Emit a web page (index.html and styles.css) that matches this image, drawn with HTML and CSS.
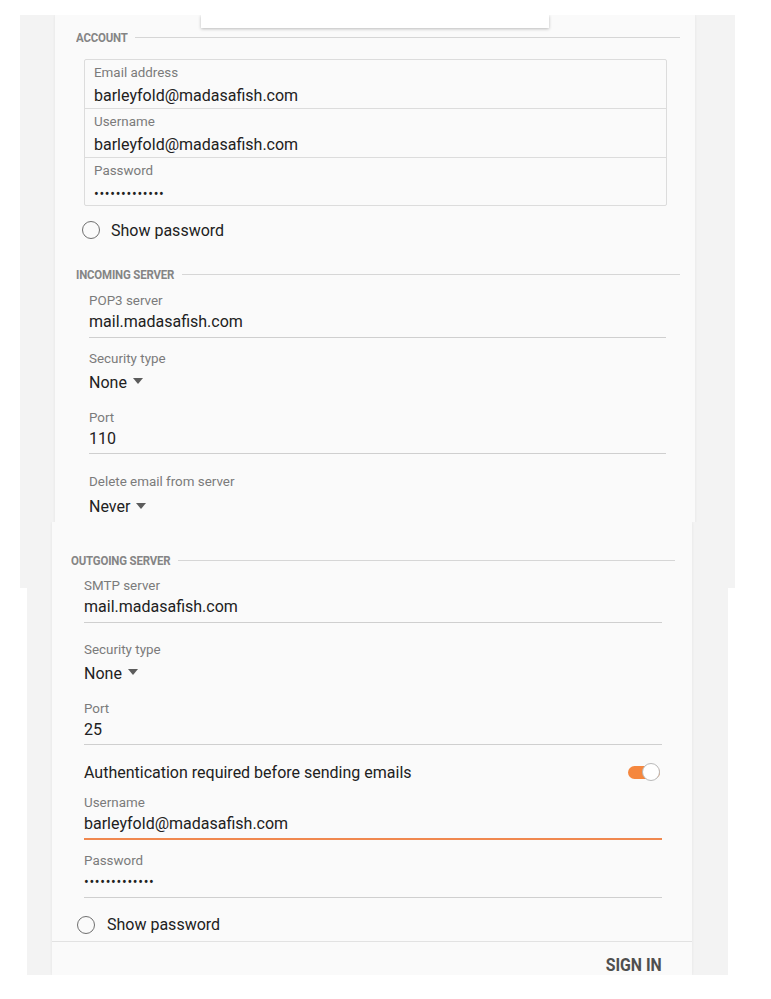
FILE: index.html
```html
<!DOCTYPE html>
<html>
<head>
<meta charset="utf-8">
<link rel="stylesheet" href="styles.css">
</head>
<body>
<div class="shot shot-top">
  <div class="card card-top">
    <div class="dropdown"></div>
    <div class="head head-account"><span class="head-text">ACCOUNT</span><span class="head-line"></span></div>
    <div class="box">
      <div class="box-row"><div class="label">Email address</div><div class="value">barleyfold@madasafish.com</div></div>
      <div class="box-row"><div class="label">Username</div><div class="value">barleyfold@madasafish.com</div></div>
      <div class="box-row last"><div class="label">Password</div><div class="value dots">•••••••••••••</div></div>
    </div>
    <div class="check check-top"><span class="radio"></span><span class="check-text">Show password</span></div>
    <div class="head head-incoming"><span class="head-text">INCOMING SERVER</span><span class="head-line"></span></div>
    <div class="field f-pop">
      <div class="label">POP3 server</div>
      <div class="value input">mail.madasafish.com</div>
    </div>
    <div class="field f-sec1">
      <div class="label">Security type</div>
      <div class="value select">None <span class="caret"></span></div>
    </div>
    <div class="field f-port1">
      <div class="label">Port</div>
      <div class="value input">110</div>
    </div>
    <div class="field f-del">
      <div class="label">Delete email from server</div>
      <div class="value select">Never <span class="caret"></span></div>
    </div>
  </div>
</div>
<div class="shot shot-bottom">
  <div class="card card-bottom">
    <div class="head head-outgoing"><span class="head-text">OUTGOING SERVER</span><span class="head-line"></span></div>
    <div class="field2 f-smtp">
      <div class="label">SMTP server</div>
      <div class="value input">mail.madasafish.com</div>
    </div>
    <div class="field2 f-sec2">
      <div class="label">Security type</div>
      <div class="value select">None <span class="caret"></span></div>
    </div>
    <div class="field2 f-port2">
      <div class="label">Port</div>
      <div class="value input">25</div>
    </div>
    <div class="auth">
      <span class="auth-text">Authentication required before sending emails</span>
      <span class="toggle"><span class="knob"></span></span>
    </div>
    <div class="field2 f-user">
      <div class="label">Username</div>
      <div class="value input focused">barleyfold@madasafish.com</div>
    </div>
    <div class="field2 f-pass">
      <div class="label">Password</div>
      <div class="value input dots">•••••••••••••</div>
    </div>
    <div class="check check-bottom"><span class="radio"></span><span class="check-text">Show password</span></div>
    <div class="footer"><span class="signin">SIGN IN</span></div>
  </div>
</div>
</body>
</html>
```
FILE: styles.css
```css
* { box-sizing: border-box; }
html, body { margin: 0; padding: 0; background: #ffffff; }
body {
  font-family: Roboto, "Noto Sans", "Liberation Sans", sans-serif;
  color: #212121;
  width: 771px;
  height: 999px;
  overflow: hidden;
}

.shot { background: #f3f3f3; }
.shot-top {
  margin: 15px 0 0 20px;
  width: 715px;
  height: 573px;
  overflow: hidden;
}
.shot-bottom {
  position: relative;
  margin: -66px 0 0 27px;
  width: 701px;
  height: 453px;
  overflow: hidden;
}
.card {
  background: #fafafa;
  height: 100%;
  box-shadow: 0 0 3px rgba(0,0,0,0.07);
  display: flex;
  flex-direction: column;
}
.card-top { margin-left: 35px; width: 640px; }
.card-bottom { margin-left: 25px; width: 640px; }

.dropdown {
  margin-left: 146px;
  width: 348px;
  height: 13px;
  background: #ffffff;
  box-shadow: 0 1px 3px rgba(0,0,0,0.25);
  flex: none;
}

.head {
  height: 18px;
  display: flex;
  align-items: center;
  gap: 6px;
  flex: none;
}
.head-text {
  font-weight: 700;
  font-size: 13px;
  color: #858585;
  letter-spacing: -0.2px;
  display: inline-block;
  transform: scaleX(0.88);
  transform-origin: left center;
  white-space: nowrap;
}
.head-line { flex: 1; height: 1px; background: #d6d6d6; }
.head-account { padding: 0 15px 0 21px; }
.head-account .head-text { margin-right: -6px; }
.head-incoming { margin-top: 23px; padding: 0 15px 0 21px; }
.head-incoming .head-text { margin-right: -12px; }
.head-outgoing { margin-top: 29px; padding: 0 17px 0 19px; }
.head-outgoing .head-text { margin-right: -12px; }

.label {
  font-size: 13.4px;
  line-height: 16px;
  color: #7b7b7b;
}
.value {
  font-size: 16px;
  line-height: 22px;
  color: #212121;
  white-space: nowrap;
}
.dots { font-size: 14px; letter-spacing: 0.7px; }

.box {
  margin: 13px 28px 0 29px;
  border: 1px solid #dcdcdc;
  border-radius: 2px;
  flex: none;
}
.box-row {
  height: 49px;
  padding: 5px 0 0 9px;
  border-bottom: 1px solid #dcdcdc;
}
.box-row.last { border-bottom: none; height: 47px; }
.box-row .value { margin-top: 4px; }

.check {
  height: 24px;
  display: flex;
  align-items: center;
  flex: none;
}
.radio {
  width: 18px;
  height: 18px;
  border: 1.4px solid #6f6f6f;
  border-radius: 50%;
  flex: none;
}
.check-text { font-size: 16px; margin-left: 11px; color: #212121; }
.check-top { margin: 12px 0 0 27px; }
.check-bottom { margin: 15px 0 0 25px; }
.check-bottom .check-text { margin-left: 12px; }

.field { margin: 0 29px 0 34px; flex: none; }
.field2 { margin: 0 30px 0 32px; flex: none; }
.input {
  margin-top: 2px;
  padding-bottom: 3px;
  height: 26.5px;
  border-bottom: 1.5px solid #cfcfcf;
}
.select { margin-top: 5px; }
.caret {
  display: inline-block;
  width: 0;
  height: 0;
  border-left: 5.5px solid transparent;
  border-right: 5.5px solid transparent;
  border-top: 6px solid #5c5c5c;
  vertical-align: middle;
  margin-left: 2px;
  position: relative;
  top: -2px;
}
.f-pop { margin-top: 10px; }
.f-sec1 { margin-top: 13px; }
.f-port1 { margin-top: 16px; }
.f-del { margin-top: 20px; }
.f-del .select { margin-top: 6px; }

.f-smtp { margin-top: 9px; }
.f-sec2 { margin-top: 19px; }
.f-port2 { margin-top: 16px; }
.f-user { margin-top: 11px; }
.f-pass { margin-top: 13px; }

.input.focused {
  height: 27px;
  border-bottom: 2px solid #f0884f;
}

.auth {
  margin: 15px 30px 0 32px;
  height: 24px;
  display: flex;
  align-items: center;
  justify-content: space-between;
  flex: none;
}
.auth-text { font-size: 16px; }
.toggle {
  position: relative;
  width: 32px;
  height: 13px;
  border-radius: 7px;
  background: #f5873e;
  margin-right: 2px;
}
.knob {
  position: absolute;
  right: 0;
  top: -3px;
  width: 18px;
  height: 18px;
  border-radius: 50%;
  background: #ffffff;
  border: 1px solid #b9b9b9;
}

.footer {
  margin-top: 4px;
  border-top: 1px solid #e2e2e2;
  flex: 1;
  display: flex;
  justify-content: flex-end;
  padding: 14px 30px 0 0;
}
.signin {
  font-weight: 700;
  font-size: 18px;
  line-height: 18px;
  color: #4f4f4f;
  display: inline-block;
  transform: scaleX(0.88);
  transform-origin: right center;
}
```
